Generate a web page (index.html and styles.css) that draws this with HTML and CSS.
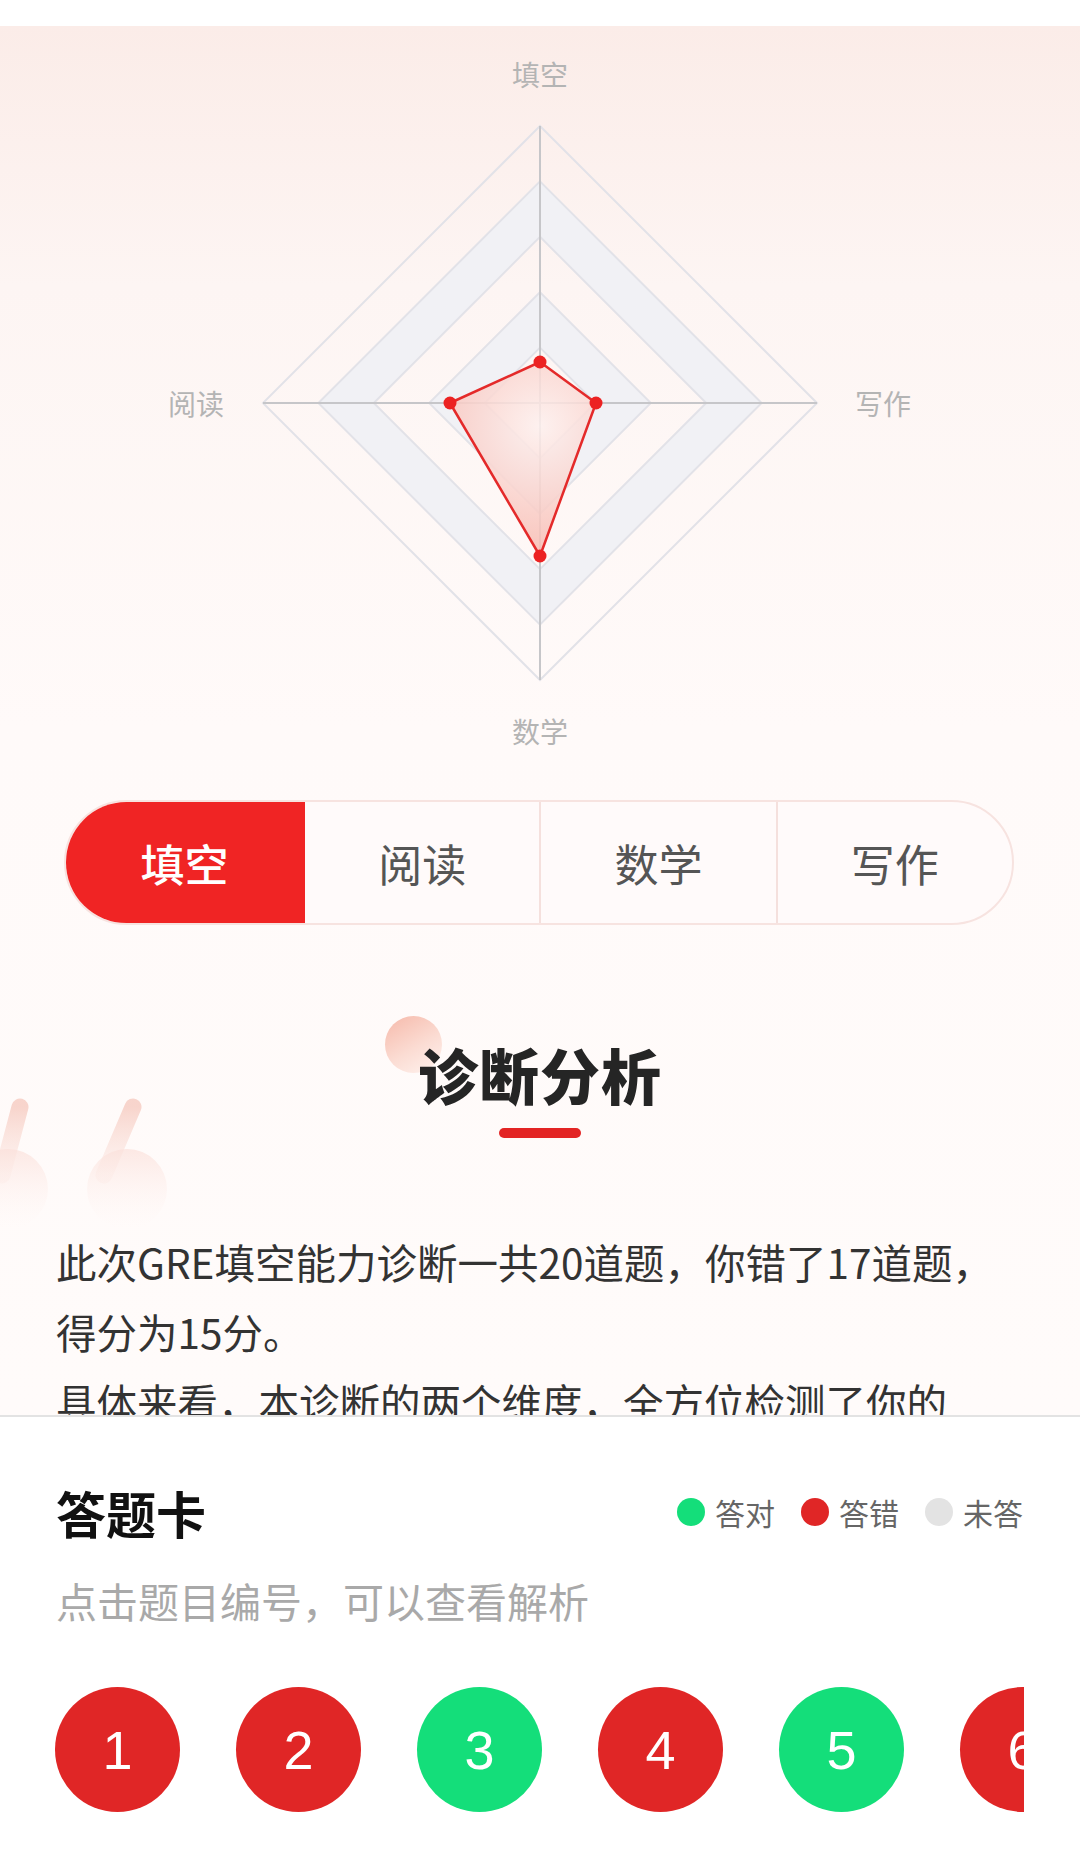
FILE: index.html
```html
<!DOCTYPE html>
<html lang="zh-CN">
  <head>
    <meta charset="UTF-8" />
    <title>诊断报告</title>
    <link rel="stylesheet" href="styles.css">
  </head>
  <body>
    <div class="top-bar"></div>

    <div class="report">
      <svg class="radar" width="1080" height="760" viewBox="0 0 1080 760">
        <defs>
          <radialGradient id="dataFill" cx="540" cy="400" r="160" gradientUnits="userSpaceOnUse">
            <stop offset="0" stop-color="#fdf0ee" />
            <stop offset="1" stop-color="#f6aea3" />
          </radialGradient>
        </defs>
        <!-- split areas -->
        <path fill="#f1f1f5" fill-rule="evenodd"
          d="M540,155.4 L761.6,377 L540,598.6 L318.4,377 Z M540,210.8 L706.2,377 L540,543.2 L373.8,377 Z" />
        <path fill="#f1f1f5" fill-rule="evenodd"
          d="M540,266.2 L650.8,377 L540,487.8 L429.2,377 Z M540,321.6 L595.4,377 L540,432.4 L484.6,377 Z" />
        <!-- split lines -->
        <g fill="none" stroke="#e2e2e8" stroke-width="2">
          <path d="M540,100 L817,377 L540,654 L263,377 Z" />
          <path d="M540,155.4 L761.6,377 L540,598.6 L318.4,377 Z" />
          <path d="M540,210.8 L706.2,377 L540,543.2 L373.8,377 Z" />
          <path d="M540,266.2 L650.8,377 L540,487.8 L429.2,377 Z" />
          <path d="M540,321.6 L595.4,377 L540,432.4 L484.6,377 Z" />
        </g>
        <!-- axes -->
        <g stroke="#c6c6c9" stroke-width="2">
          <line x1="540" y1="100" x2="540" y2="654" />
          <line x1="263" y1="377" x2="817" y2="377" />
        </g>
        <!-- data -->
        <path fill="url(#dataFill)" fill-opacity="0.85" stroke="#e42a2a" stroke-width="2.5" stroke-linejoin="round"
          d="M540,336 L596,377 L540,530 L450,377 Z" />
        <g fill="#ec2222">
          <circle cx="540" cy="336" r="6.5" />
          <circle cx="596" cy="377" r="6.5" />
          <circle cx="540" cy="530" r="6.5" />
          <circle cx="450" cy="377" r="6.5" />
        </g>
        <g class="radar-label" text-anchor="middle" dominant-baseline="central">
          <text x="540" y="48">填空</text>
          <text x="883" y="377">写作</text>
          <text x="540" y="705">数学</text>
          <text x="196" y="377">阅读</text>
        </g>
      </svg>

      <div class="tabs">
        <div class="tab active">填空</div>
        <div class="tab">阅读</div>
        <div class="tab">数学</div>
        <div class="tab">写作</div>
      </div>

      <div class="analysis">
        <svg class="quote" width="180" height="130" viewBox="0 0 180 130">
          <defs>
            <linearGradient id="quoteStroke" x1="0" y1="0" x2="0" y2="1">
              <stop offset="0" stop-color="#f6cbc1" stop-opacity="0.8" />
              <stop offset="1" stop-color="#fbe4de" stop-opacity="0.3" />
            </linearGradient>
            <linearGradient id="quoteBlob" x1="0" y1="0" x2="0" y2="1">
              <stop offset="0" stop-color="#fbe0da" stop-opacity="0.7" />
              <stop offset="1" stop-color="#fff6f4" stop-opacity="0" />
            </linearGradient>
          </defs>
          <g stroke="url(#quoteStroke)" stroke-width="17" stroke-linecap="round" fill="none">
            <line x1="20" y1="10" x2="2" y2="78" />
            <line x1="133" y1="10" x2="104" y2="78" />
          </g>
          <g fill="url(#quoteBlob)">
            <circle cx="8" cy="92" r="40" />
            <circle cx="127" cy="92" r="40" />
          </g>
        </svg>

        <div class="title-wrap">
          <span class="title-dot"></span>
          <h2 class="title">诊断分析</h2>
        </div>
        <div class="title-line"></div>

        <p class="summary">
          此次GRE填空能力诊断一共20道题，你错了17道题，<br>
          得分为15分。<br>
          具体来看，本诊断的两个维度，全方位检测了你的<br>
          GRE填空的词汇能力和逻辑推理能力。
        </p>
      </div>
    </div>

    <div class="answer-sheet">
      <div class="sheet-head">
        <h3>答题卡</h3>
        <div class="legend">
          <span class="dot green"></span><span class="legend-text">答对</span>
          <span class="dot red"></span><span class="legend-text">答错</span>
          <span class="dot gray"></span><span class="legend-text">未答</span>
        </div>
      </div>
      <p class="sheet-tip">点击题目编号，可以查看解析</p>
      <div class="numbers">
        <div class="num red">1</div>
        <div class="num red">2</div>
        <div class="num green">3</div>
        <div class="num red">4</div>
        <div class="num green">5</div>
        <div class="num red">6</div>
        <div class="num red">7</div>
      </div>
    </div>
  </body>
</html>
```

FILE: styles.css
```css
body {
  margin: 0;
  width: 1080px;
  height: 1866px;
  overflow: hidden;
  background: #ffffff;
  font-family: "Noto Sans CJK SC", "Noto Sans", sans-serif;
  color: #333;
}

.top-bar {
  height: 26px;
  background: #ffffff;
}

.report {
  position: relative;
  height: 1389px;
  overflow: hidden;
  background: linear-gradient(to bottom, #fbece8 0, #fdf5f3 260px, #fffaf9 700px, #fffbfa 100%);
}

.radar {
  display: block;
}

.radar-label {
  font-size: 28px;
  fill: #b4b4b4;
}

.tabs {
  display: flex;
  width: 950px;
  height: 125px;
  margin: 14px 0 0 64px;
  border-radius: 63px;
  overflow: hidden;
  box-sizing: border-box;
  border: 2px solid #f7e3e0;
  background: #fffafa;
}

.tab {
  flex: 1;
  display: flex;
  align-items: center;
  justify-content: center;
  font-size: 44px;
  color: #555;
  border-left: 2px solid #f5e0dd;
}

.tab:first-child {
  border-left: none;
}

.tab.active {
  flex: 0 0 241px;
  background: #f02424;
  color: #ffffff;
  font-weight: 500;
  margin: -2px 0 -2px -2px;
}

.tab.active + .tab {
  border-left: none;
}

.analysis {
  position: relative;
  padding-top: 119px;
}

.quote {
  position: absolute;
  left: 0;
  top: 172px;
}

.title-wrap {
  position: relative;
  width: 244px;
  margin: 0 auto;
}

.title-dot {
  position: absolute;
  left: -33px;
  top: -28px;
  width: 57px;
  height: 57px;
  border-radius: 50%;
  background: linear-gradient(150deg, #f6b9aa 0%, #fbdcd3 55%, #fff3ef 100%);
}

.title {
  position: relative;
  margin: 0;
  font-size: 60px;
  line-height: 60px;
  font-weight: 900;
  letter-spacing: 1px;
  color: #252525;
  text-align: center;
  white-space: nowrap;
}

.title-line {
  width: 82px;
  height: 10px;
  margin: 24px auto 0;
  border-radius: 5px;
  background: #e32424;
}

.summary {
  position: relative;
  margin: 89px 0 0;
  padding: 0 56px;
  font-size: 40.5px;
  line-height: 70px;
  color: #333;
  white-space: nowrap;
}

.answer-sheet {
  border-top: 2px solid #e3e3e3;
  background: #ffffff;
  padding-top: 65px;
  box-sizing: border-box;
  height: 451px;
}

.sheet-head {
  display: flex;
  justify-content: space-between;
  align-items: center;
  padding: 0 57px 0 56px;
  height: 60px;
}

.sheet-head h3 {
  margin: 0;
  font-size: 50px;
  font-weight: 700;
  color: #111;
}

.legend {
  display: flex;
  align-items: center;
}

.dot {
  width: 28px;
  height: 28px;
  border-radius: 50%;
  margin-right: 10px;
}

.legend-text {
  font-size: 30px;
  line-height: 40px;
  color: #666;
  margin-right: 26px;
}

.legend-text:last-child {
  margin-right: 0;
}

.dot.green {
  background: #14de7a;
}

.dot.red {
  background: #e02626;
}

.dot.gray {
  background: #e3e3e3;
}

.sheet-tip {
  margin: 33px 0 0;
  padding: 0 56px;
  font-size: 41px;
  line-height: 50px;
  color: #a9a9a9;
}

.numbers {
  display: flex;
  gap: 56px;
  margin: 62px 56px 0 55px;
  overflow: hidden;
}

.num {
  flex-shrink: 0;
  width: 125px;
  height: 125px;
  border-radius: 50%;
  display: flex;
  align-items: center;
  justify-content: center;
  font-family: "Liberation Sans", Arial, sans-serif;
  font-size: 54px;
  color: #ffffff;
}

.num.red {
  background: #e02626;
}

.num.green {
  background: #14de7a;
}
```
